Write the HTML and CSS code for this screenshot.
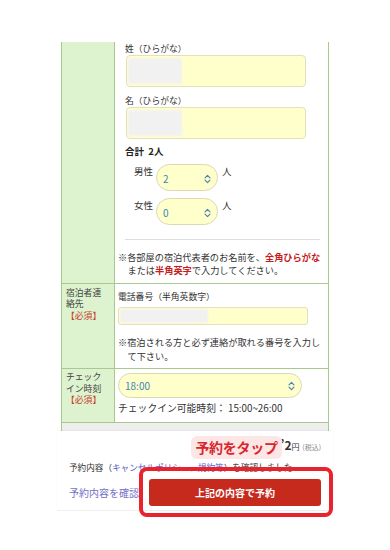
FILE: index.html
```html
<!DOCTYPE html>
<html lang="ja">
<head>
<meta charset="utf-8">
<link rel="stylesheet" href="styles.css">
</head>
<body>
<div class="table">
  <div class="row">
    <div class="th"></div>
    <div class="td td-name">
      <div class="name-block">
        <div class="fld-label">姓（ひらがな）</div>
        <div class="inp inp-lg"><span class="blur"></span></div>
        <div class="fld-label gap">名（ひらがな）</div>
        <div class="inp inp-lg"><span class="blur"></span></div>
        <div class="total">合計&nbsp; 2人</div>
        <div class="gender">
          <span class="g-label">男性</span>
          <div class="sel sel-sm"><span class="val">2</span>
            <svg class="chev" viewBox="0 0 8 11" width="7" height="10"><path d="M1.2 4.2 L4 1.4 L6.8 4.2 M1.2 6.8 L4 9.6 L6.8 6.8" fill="none" stroke="#4a86ad" stroke-width="1.4" stroke-linecap="round" stroke-linejoin="round"/></svg>
          </div>
          <span class="unit">人</span>
        </div>
        <div class="gender gender2">
          <span class="g-label">女性</span>
          <div class="sel sel-sm"><span class="val">0</span>
            <svg class="chev" viewBox="0 0 8 11" width="7" height="10"><path d="M1.2 4.2 L4 1.4 L6.8 4.2 M1.2 6.8 L4 9.6 L6.8 6.8" fill="none" stroke="#4a86ad" stroke-width="1.4" stroke-linecap="round" stroke-linejoin="round"/></svg>
          </div>
          <span class="unit">人</span>
        </div>
        <div class="divider"></div>
      </div>
      <p class="note note1">※各部屋の宿泊代表者のお名前を、<b class="em">全角ひらがな</b><br>または<b class="em">半角英字</b>で入力してください。</p>
    </div>
  </div>
  <div class="row">
    <div class="th th-contact">宿泊者連<br>絡先<br><span class="req">【必須】</span></div>
    <div class="td td-contact">
      <div class="fld-label">電話番号（半角英数字）</div>
      <div class="inp inp-sm"><span class="blur blur-wide"></span></div>
      <p class="note note2">※宿泊される方と必ず連絡が取れる番号を入力し<br>て下さい。</p>
    </div>
  </div>
  <div class="row">
    <div class="th th-checkin">チェック<br>イン時刻<br><span class="req">【必須】</span></div>
    <div class="td td-checkin">
      <div class="sel sel-lg"><span class="val">18:00</span>
        <svg class="chev" viewBox="0 0 8 11" width="7" height="10"><path d="M1.2 4.2 L4 1.4 L6.8 4.2 M1.2 6.8 L4 9.6 L6.8 6.8" fill="none" stroke="#4a86ad" stroke-width="1.4" stroke-linecap="round" stroke-linejoin="round"/></svg>
      </div>
      <div class="ci-time">チェックイン可能時刻： 15:00~26:00</div>
    </div>
  </div>
  <div class="row-gray"></div>
</div>

<div class="bar">
  <div class="price"><span class="p-num">’2</span><span class="p-yen">円</span> <span class="p-tax">(税込)</span></div>
  <div class="confirm">予約内容（<span class="link">キャンセルポリシー、規約等</span>）を確認しました</div>
  <div class="actions">
    <span class="check-link">予約内容を確認</span>
    <button class="btn">上記の内容で予約</button>
  </div>
  <div class="callout">予約をタップ</div>
  <div class="highlight"></div>
</div>
</body>
</html>
```

FILE: styles.css
```css
* { box-sizing: border-box; }
html, body { margin: 0; padding: 0; background: #fff; }
body {
  width: 390px;
  height: 550px;
  overflow: hidden;
  font-family: "Noto Sans CJK JP", "Noto Sans", sans-serif;
  color: #333;
}

.table {
  margin: 42px 0 0 61px;
  width: 268px;
  border-left: 1px solid #a9c88e;
  border-right: 1px solid #a9c88e;
}
.row {
  display: grid;
  grid-template-columns: 53px 1fr;
  border-bottom: 1px solid #a9c88e;
}
.th {
  background: #ddf3cf;
  border-right: 1px solid #a9c88e;
  font-size: 8.8px;
  line-height: 11.5px;
  color: #444;
  padding: 2.5px 0 0 4px;
}
.req { color: #c8402e; }
.th-checkin { padding-top: 2px; }

.td { padding: 0 0 6px 3px; }
.name-block { padding-left: 7px; }
.fld-label {
  font-size: 8.8px;
  line-height: 13px;
  color: #333;
}
.fld-label.gap { margin-top: 7px; }

.inp {
  position: relative;
  background: #ffffcc;
  border: 1px solid #e4e0bb;
  border-radius: 4px;
  overflow: hidden;
}
.inp-lg { height: 32px; width: 180px; margin-left: 1px; }
.blur {
  display: block;
  margin: 2px 0 0 1px;
  width: 54px;
  height: 26px;
  background: #f1f1f1;
  filter: blur(0.8px);
}

.total {
  margin-top: 6px;
  font-size: 9.5px;
  line-height: 13px;
  font-weight: bold;
  color: #222;
}
.gender {
  display: flex;
  align-items: flex-start;
  margin-top: 6px;
  padding-left: 9px;
}
.gender2 { margin-top: 7px; }
.g-label, .unit {
  font-size: 9.5px;
  line-height: 13px;
  margin-top: 1px;
  color: #333;
}
.g-label { width: 22px; }
.unit { margin-left: 4px; }

.sel {
  display: flex;
  align-items: center;
  justify-content: space-between;
  background: #ffffcc;
  border: 1px solid #dcd8b4;
  border-radius: 14px;
  color: #3c86b5;
  font-size: 10px;
}
.sel-sm { width: 62px; height: 27px; padding: 2px 6px 0 6px; }
.sel-lg { width: 184px; height: 25px; padding: 0 6px 0 6px; margin-top: 4px; }
.val { line-height: 12px; }
.chev { display: block; }

.divider {
  margin-top: 14px;
  width: 195px;
  height: 1px;
  background: #dddddd;
}
.note {
  margin: 11px 0 0 0;
  font-size: 9.2px;
  line-height: 13px;
  padding-left: 9.5px;
  text-indent: -9.5px;
  color: #333;
}
.em { color: #c4201b; font-weight: bold; }

.td-contact { padding-top: 6px; padding-bottom: 5px; }
.inp-sm { height: 18px; width: 190px; margin-top: 4px; border-radius: 3px; }
.blur-wide { width: 88px; height: 14px; margin: 1px 0 0 1px; }
.note2 { line-height: 13.5px; }

.td-checkin { padding-bottom: 7px; }
.ci-time {
  margin-top: 4px;
  font-size: 9.8px;
  line-height: 13px;
  color: #333;
}

.row-gray {
  height: 8px;
  background: #eeeeee;
}

.bar {
  position: relative;
  margin-left: 57px;
  width: 276px;
  height: 80px;
  background: #fff;
  border-bottom: 1px solid #eeeeee;
  padding: 7px 12px 0 12px;
  box-shadow: 0 -1px 2px rgba(0,0,0,0.04);
}
.price {
  text-align: right;
  line-height: 14px;
  font-size: 12px;
  font-weight: bold;
  color: #333;
}
.p-yen { font-size: 8px; font-weight: normal; }
.p-tax { font-size: 7px; font-weight: normal; color: #888; }
.confirm {
  margin-top: 7px;
  font-size: 8.6px;
  line-height: 12px;
  color: #333;
  white-space: nowrap;
}
.link { color: #5b5bc6; }
.actions {
  display: flex;
  align-items: center;
  justify-content: space-between;
  margin-top: 6px;
}
.check-link {
  font-size: 10px;
  color: #7272c8;
  line-height: 14px;
}
.btn {
  width: 172px;
  height: 27px;
  border: none;
  border-radius: 3px;
  background: #c62a1d;
  color: #fff;
  font-family: inherit;
  font-size: 10px;
  font-weight: bold;
  padding: 0;
}

.callout {
  position: absolute;
  left: 134px;
  top: 5px;
  width: 91px;
  height: 23px;
  border-radius: 6px;
  background: #fde6e6;
  color: #d8262c;
  font-size: 14px;
  font-weight: bold;
  line-height: 23px;
  text-align: center;
  letter-spacing: -0.3px;
}
.highlight {
  position: absolute;
  left: 82px;
  top: 36px;
  width: 194px;
  height: 50px;
  border: 4px solid #e8232d;
  border-radius: 8px;
}
```
